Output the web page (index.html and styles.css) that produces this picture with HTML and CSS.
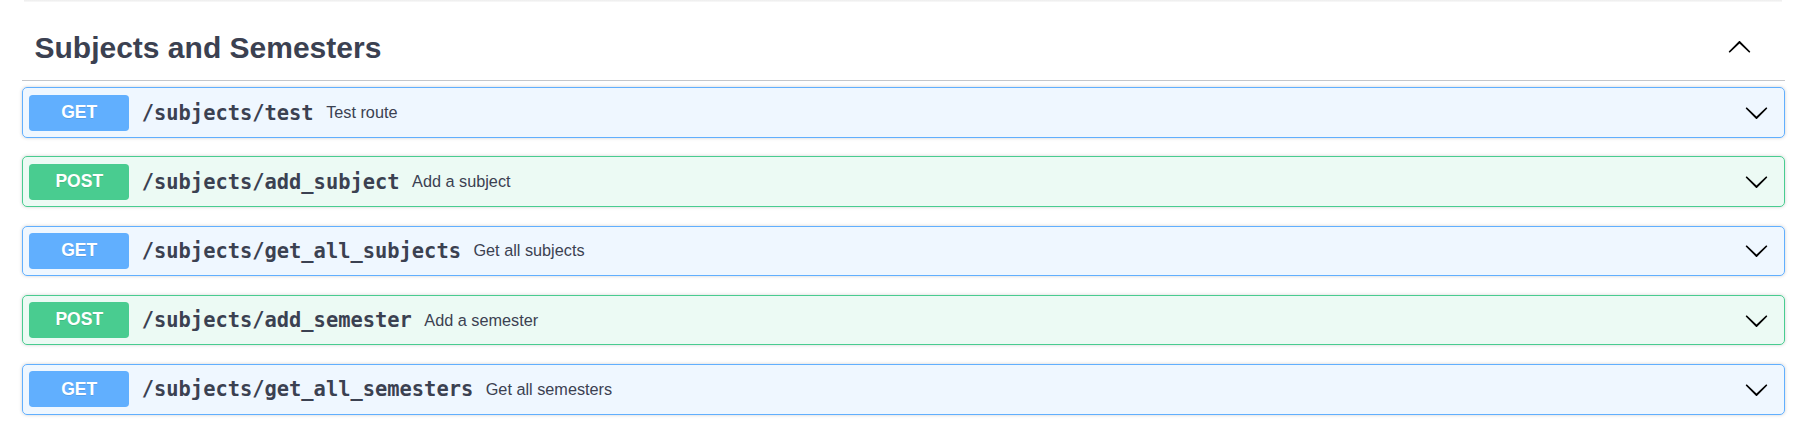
FILE: index.html
```html
<!DOCTYPE html>
<html>
<head>
<meta charset="utf-8">
<link rel="stylesheet" href="styles.css">
<title>Subjects and Semesters</title>
</head>
<body>
<div class="wrap">
  <div class="prev-edge"></div>
  <div class="tag">
    <h3 class="tag-title">Subjects and Semesters</h3>
    <svg class="arrow arrow-up" viewBox="0 0 20 20" width="25" height="25"><path d="M17.418 6.109c.272-.268.709-.268.979 0s.271.701 0 .969l-7.908 7.83c-.27.268-.707.268-.979 0l-7.908-7.83c-.27-.268-.27-.701 0-.969.271-.268.709-.268.979 0L10 13.25l7.418-7.141z"/></svg>
  </div>

  <div class="opblock get">
    <div class="summary">
      <span class="method">GET</span>
      <span class="path">/subjects/test</span>
      <span class="desc">Test route</span>
      <svg class="arrow" viewBox="0 0 20 20" width="25" height="25"><path d="M17.418 6.109c.272-.268.709-.268.979 0s.271.701 0 .969l-7.908 7.83c-.27.268-.707.268-.979 0l-7.908-7.83c-.27-.268-.27-.701 0-.969.271-.268.709-.268.979 0L10 13.25l7.418-7.141z"/></svg>
    </div>
  </div>

  <div class="opblock post">
    <div class="summary">
      <span class="method">POST</span>
      <span class="path">/subjects/add_subject</span>
      <span class="desc">Add a subject</span>
      <svg class="arrow" viewBox="0 0 20 20" width="25" height="25"><path d="M17.418 6.109c.272-.268.709-.268.979 0s.271.701 0 .969l-7.908 7.83c-.27.268-.707.268-.979 0l-7.908-7.830c-.27-.268-.27-.701 0-.969.271-.268.709-.268.979 0L10 13.25l7.418-7.141z"/></svg>
    </div>
  </div>

  <div class="opblock get">
    <div class="summary">
      <span class="method">GET</span>
      <span class="path">/subjects/get_all_subjects</span>
      <span class="desc">Get all subjects</span>
      <svg class="arrow" viewBox="0 0 20 20" width="25" height="25"><path d="M17.418 6.109c.272-.268.709-.268.979 0s.271.701 0 .969l-7.908 7.83c-.27.268-.707.268-.979 0l-7.908-7.83c-.27-.268-.27-.701 0-.969.271-.268.709-.268.979 0L10 13.25l7.418-7.141z"/></svg>
    </div>
  </div>

  <div class="opblock post">
    <div class="summary">
      <span class="method">POST</span>
      <span class="path">/subjects/add_semester</span>
      <span class="desc">Add a semester</span>
      <svg class="arrow" viewBox="0 0 20 20" width="25" height="25"><path d="M17.418 6.109c.272-.268.709-.268.979 0s.271.701 0 .969l-7.908 7.83c-.27.268-.707.268-.979 0l-7.908-7.83c-.27-.268-.27-.701 0-.969.271-.268.709-.268.979 0L10 13.25l7.418-7.141z"/></svg>
    </div>
  </div>

  <div class="opblock get">
    <div class="summary">
      <span class="method">GET</span>
      <span class="path">/subjects/get_all_semesters</span>
      <span class="desc">Get all semesters</span>
      <svg class="arrow" viewBox="0 0 20 20" width="25" height="25"><path d="M17.418 6.109c.272-.268.709-.268.979 0s.271.701 0 .969l-7.908 7.83c-.27.268-.707.268-.979 0l-7.908-7.83c-.27-.268-.27-.701 0-.969.271-.268.709-.268.979 0L10 13.25l7.418-7.141z"/></svg>
    </div>
  </div>
</div>
</body>
</html>
```

FILE: styles.css
```css
html, body {
  margin: 0;
  padding: 0;
  background: #ffffff;
}

body {
  font-family: "Liberation Sans", Arial, sans-serif;
  color: #3b4151;
}

.wrap {
  padding: 0 29px 0 22px;
}

.prev-edge {
  height: 2px;
  margin: 0 3px 0 2px;
  background: linear-gradient(#ececec, #f9f9f9);
}

.tag {
  display: flex;
  align-items: center;
  margin-top: 13px;
  padding: 12.5px 33px 12.5px 12.5px;
  border-bottom: 1px solid rgba(59, 65, 81, 0.3);
  margin-bottom: 6.25px;
}

.tag-title {
  flex: 1;
  margin: 0;
  font-family: "Liberation Sans", Arial, sans-serif;
  font-size: 30px;
  line-height: 40px;
  font-weight: 700;
  color: #3b4151;
}

.arrow {
  flex: none;
  display: block;
  fill: #000000;
}

.arrow-up {
  transform: rotate(180deg);
}

.opblock {
  border: 1px solid;
  border-radius: 5px;
  box-shadow: 0 0 3.75px rgba(0, 0, 0, 0.19);
  margin-bottom: 18.4px;
}

.opblock.get {
  background: rgba(97, 175, 254, 0.1);
  border-color: #61affe;
}

.opblock.post {
  background: rgba(73, 204, 144, 0.1);
  border-color: #49cc90;
}

.summary {
  display: flex;
  align-items: center;
  padding: 6.25px 15px 6.25px 6.25px;
}

.method {
  flex: none;
  box-sizing: border-box;
  width: 100px;
  padding: 7.5px 0;
  border-radius: 3.75px;
  text-align: center;
  font-family: "Liberation Sans", Arial, sans-serif;
  font-size: 17.5px;
  line-height: 21.25px;
  font-weight: 700;
  color: #ffffff;
  text-shadow: 0 1px 0 rgba(0, 0, 0, 0.1);
}

.get .method {
  background: #61affe;
}

.post .method {
  background: #49cc90;
}

.path {
  flex: none;
  padding: 0 12.5px;
  font-family: "DejaVu Sans Mono", "Liberation Mono", monospace;
  font-size: 20.4px;
  font-weight: 700;
  color: #3b4151;
}

.desc {
  flex: 1;
  font-family: "Liberation Sans", Arial, sans-serif;
  font-size: 16.25px;
  color: #3b4151;
}
```
